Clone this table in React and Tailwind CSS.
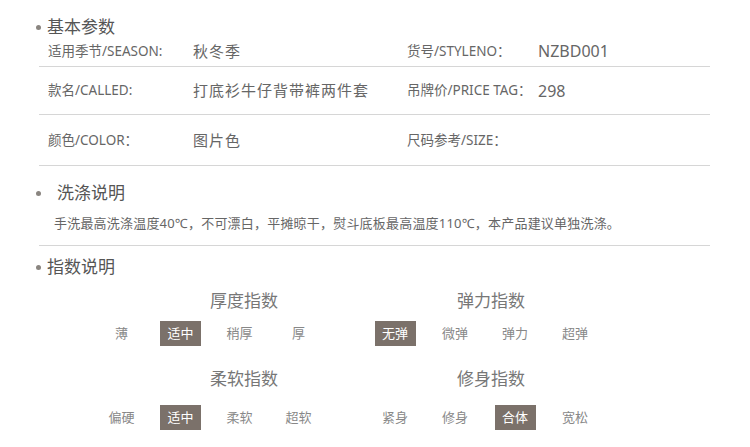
import React from "react";

const font = { fontFamily: '"Noto Sans", "Noto Sans CJK SC", sans-serif' };

const rows = [
  { h: "h-[31px]", l: "适用季节/SEASON:", v: "秋冬季", rl: "货号/STYLENO：", rv: "NZBD001" },
  { h: "h-[48px]", l: "款名/CALLED:", v: "打底衫牛仔背带裤两件套", rl: "吊牌价/PRICE TAG：", rv: "298" },
  { h: "h-[51px]", l: "颜色/COLOR：", v: "图片色", rl: "尺码参考/SIZE：", rv: "" },
];

const indexRows = [
  {
    left: { title: "厚度指数", items: ["薄", "适中", "稍厚", "厚"], on: 1 },
    right: { title: "弹力指数", items: ["无弹", "微弹", "弹力", "超弹"], on: 0 },
  },
  {
    left: { title: "柔软指数", items: ["偏硬", "适中", "柔软", "超软"], on: 1 },
    right: { title: "修身指数", items: ["紧身", "修身", "合体", "宽松"], on: 2 },
  },
];

function Heading({ children, gap }) {
  return (
    <div className="flex items-center h-[18px] pl-[36px]">
      <span className={`w-[5px] h-[5px] rounded-full bg-[#8a8580] ${gap}`} />
      <span className="text-[17px] leading-[18px] text-[#555]">{children}</span>
    </div>
  );
}

function Options({ items, on, cell }) {
  return (
    <div className="flex h-[25px]">
      {items.map((t, i) => (
        <div key={t + i} className={`${cell} flex items-center justify-center`}>
          {i === on ? (
            <span className="w-[41px] h-[25px] flex items-center justify-center bg-[#7b716a] text-white text-[13px]">
              {t}
            </span>
          ) : (
            <span className="text-[13px] text-[#888]">{t}</span>
          )}
        </div>
      ))}
    </div>
  );
}

export default function App() {
  return (
    <div className="w-[750px] h-[447px] bg-white overflow-hidden" style={font}>
      <div className="pt-[18px]">
        <Heading gap="mr-[6px]">基本参数</Heading>
      </div>

      <div className="ml-[39px] w-[671px]">
        {rows.map((r) => (
          <div key={r.l} className={`${r.h} flex items-center border-b border-[#d6d6d6]`}>
            <div className="w-[154px] pl-[9px] text-[13.5px] text-[#666]">{r.l}</div>
            <div className="w-[214px] text-[15px] tracking-[1px] text-[#666]">{r.v}</div>
            <div className="w-[131px] text-[13.5px] text-[#666] whitespace-nowrap">{r.rl}</div>
            <div className="text-[16px] text-[#666]">{r.rv}</div>
          </div>
        ))}
      </div>

      <div className="mt-[18px]">
        <Heading gap="mr-[16px]">洗涤说明</Heading>
      </div>
      <div className="ml-[39px] w-[671px] border-b border-[#d6d6d6] pt-[12px] pb-[13px]">
        <p className="pl-[15px] text-[13px] leading-[18px] tracking-[0.2px] text-[#666] whitespace-nowrap">
          手洗最高洗涤温度40℃，不可漂白，平摊晾干，熨斗底板最高温度110℃，本产品建议单独洗涤。
        </p>
      </div>

      <div className="mt-[12px]">
        <Heading gap="mr-[6px]">指数说明</Heading>
      </div>

      {indexRows.map((row, k) => (
        <div key={k} className={`flex ml-[92px] ${k === 0 ? "mt-[15px]" : "mt-[23px]"}`}>
          <div className="w-[273px]">
            <div className="pl-[118px] text-[17px] leading-[20px] text-[#777]">{row.left.title}</div>
            <div className={k === 0 ? "mt-[10px]" : "mt-[16px]"}>
              <Options items={row.left.items} on={row.left.on} cell="w-[59px]" />
            </div>
          </div>
          <div className="w-[260px]">
            <div className="pl-[92px] text-[17px] leading-[20px] text-[#777]">{row.right.title}</div>
            <div className={k === 0 ? "mt-[10px]" : "mt-[16px]"}>
              <Options items={row.right.items} on={row.right.on} cell="w-[60px]" />
            </div>
          </div>
        </div>
      ))}
    </div>
  );
}
